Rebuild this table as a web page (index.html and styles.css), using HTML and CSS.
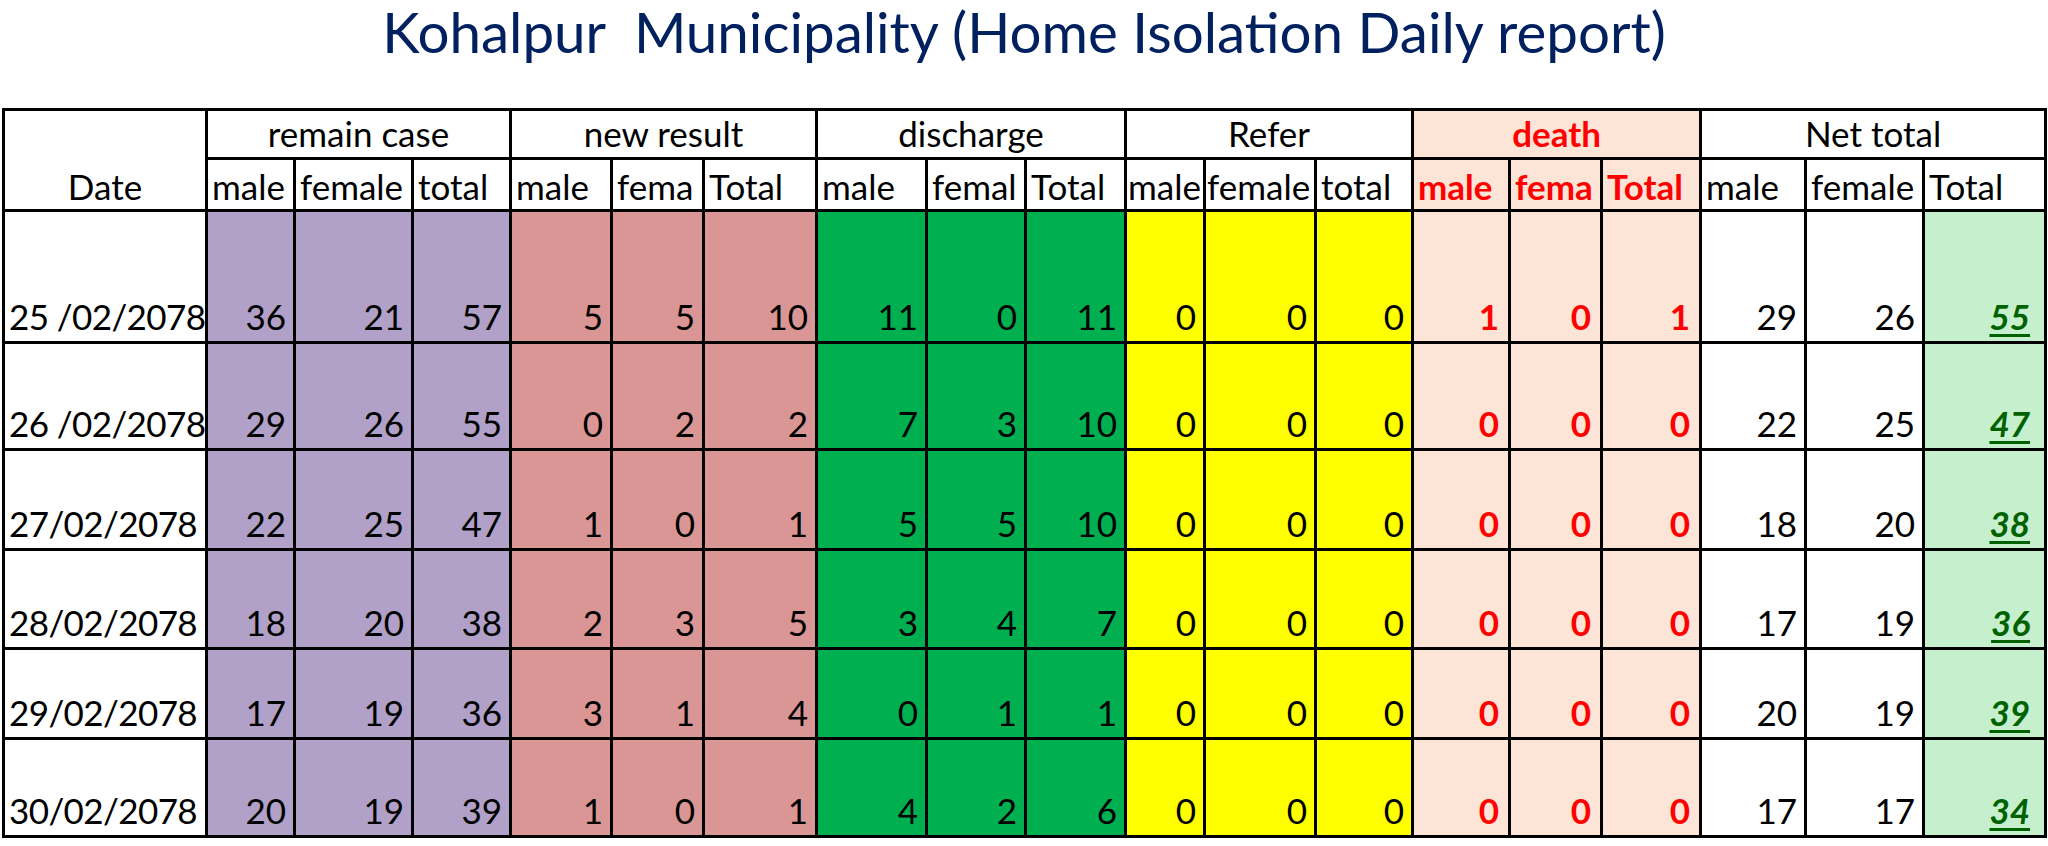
FILE: index.html
```html
<!DOCTYPE html>
<html>
<head>
<meta charset="utf-8">
<title>Kohalpur Municipality (Home Isolation Daily report)</title>
<link rel="stylesheet" href="styles.css">
</head>
<body>
<h1 class="title">Kohalpur&nbsp; Municipality (Home Isolation Daily report)</h1>
<table class="report">
  <colgroup>
    <col class="c-date">
    <col class="w88"><col class="w118"><col class="w98">
    <col class="w101"><col class="w92"><col class="w113">
    <col class="w110"><col class="w99"><col class="w100">
    <col class="w79"><col class="w111"><col class="w97">
    <col class="w97"><col class="w92"><col class="w99">
    <col class="w105"><col class="w118"><col class="w122">
  </colgroup>
  <thead>
    <tr class="h1row">
      <th class="date-head" rowspan="2">Date</th>
      <th colspan="3">remain case</th>
      <th colspan="3">new result</th>
      <th colspan="3">discharge</th>
      <th colspan="3">Refer</th>
      <th colspan="3" class="death">death</th>
      <th colspan="3">Net total</th>
    </tr>
    <tr class="h2row">
      <th>male</th><th>female</th><th>total</th>
      <th>male</th><th>fema</th><th>Total</th>
      <th>male</th><th>femal</th><th>Total</th>
      <th class="tight">male</th><th class="tight">female</th><th>total</th>
      <th class="death">male</th><th class="death">fema</th><th class="death">Total</th>
      <th>male</th><th>female</th><th>Total</th>
    </tr>
  </thead>
  <tbody>
    <tr>
      <td class="date">25 /02/2078</td>
      <td class="remain">36</td><td class="remain">21</td><td class="remain">57</td>
      <td class="new">5</td><td class="new">5</td><td class="new">10</td>
      <td class="dis">11</td><td class="dis">0</td><td class="dis">11</td>
      <td class="ref">0</td><td class="ref">0</td><td class="ref">0</td>
      <td class="death">1</td><td class="death">0</td><td class="death">1</td>
      <td>29</td><td>26</td><td class="net">55</td>
    </tr>
    <tr>
      <td class="date">26 /02/2078</td>
      <td class="remain">29</td><td class="remain">26</td><td class="remain">55</td>
      <td class="new">0</td><td class="new">2</td><td class="new">2</td>
      <td class="dis">7</td><td class="dis">3</td><td class="dis">10</td>
      <td class="ref">0</td><td class="ref">0</td><td class="ref">0</td>
      <td class="death">0</td><td class="death">0</td><td class="death">0</td>
      <td>22</td><td>25</td><td class="net">47</td>
    </tr>
    <tr>
      <td class="date">27/02/2078</td>
      <td class="remain">22</td><td class="remain">25</td><td class="remain">47</td>
      <td class="new">1</td><td class="new">0</td><td class="new">1</td>
      <td class="dis">5</td><td class="dis">5</td><td class="dis">10</td>
      <td class="ref">0</td><td class="ref">0</td><td class="ref">0</td>
      <td class="death">0</td><td class="death">0</td><td class="death">0</td>
      <td>18</td><td>20</td><td class="net">38</td>
    </tr>
    <tr>
      <td class="date">28/02/2078</td>
      <td class="remain">18</td><td class="remain">20</td><td class="remain">38</td>
      <td class="new">2</td><td class="new">3</td><td class="new">5</td>
      <td class="dis">3</td><td class="dis">4</td><td class="dis">7</td>
      <td class="ref">0</td><td class="ref">0</td><td class="ref">0</td>
      <td class="death">0</td><td class="death">0</td><td class="death">0</td>
      <td>17</td><td>19</td><td class="net">36</td>
    </tr>
    <tr>
      <td class="date">29/02/2078</td>
      <td class="remain">17</td><td class="remain">19</td><td class="remain">36</td>
      <td class="new">3</td><td class="new">1</td><td class="new">4</td>
      <td class="dis">0</td><td class="dis">1</td><td class="dis">1</td>
      <td class="ref">0</td><td class="ref">0</td><td class="ref">0</td>
      <td class="death">0</td><td class="death">0</td><td class="death">0</td>
      <td>20</td><td>19</td><td class="net">39</td>
    </tr>
    <tr>
      <td class="date">30/02/2078</td>
      <td class="remain">20</td><td class="remain">19</td><td class="remain">39</td>
      <td class="new">1</td><td class="new">0</td><td class="new">1</td>
      <td class="dis">4</td><td class="dis">2</td><td class="dis">6</td>
      <td class="ref">0</td><td class="ref">0</td><td class="ref">0</td>
      <td class="death">0</td><td class="death">0</td><td class="death">0</td>
      <td>17</td><td>17</td><td class="net">34</td>
    </tr>
  </tbody>
</table>
</body>
</html>
```

FILE: styles.css
```css
html, body {
  margin: 0;
  padding: 0;
  background: #ffffff;
}

body {
  font-family: "Lato", "Open Sans", sans-serif;
  color: #000000;
}

.title {
  margin: 0;
  padding: 0;
  font-size: 56.5px;
  line-height: 62px;
  font-weight: normal;
  text-align: center;
  color: #002060;
}

.report {
  margin: 46px 0 0 2px;
  border-collapse: collapse;
  table-layout: fixed;
  width: 2042px;
  font-size: 35px;
  line-height: 1.15;
}

.c-date { width: 203px; }
.w79 { width: 79px; }
.w88 { width: 88px; }
.w92 { width: 92px; }
.w97 { width: 97px; }
.w98 { width: 98px; }
.w99 { width: 99px; }
.w100 { width: 100px; }
.w101 { width: 101px; }
.w105 { width: 105px; }
.w110 { width: 110px; }
.w111 { width: 111px; }
.w113 { width: 113px; }
.w118 { width: 118px; }
.w122 { width: 122px; }

.report th,
.report td {
  border: 3px solid #000000;
  padding: 0 7px 5px 7px;
  vertical-align: bottom;
  white-space: nowrap;
  overflow: hidden;
  font-weight: normal;
}

.report td {
  text-align: right;
}

.h1row { height: 49px; }
.h1row th { text-align: center; padding-bottom: 4px; }

.h2row { height: 52px; }
.report .h2row th { text-align: left; padding: 0 0 3px 4px; }
.report .h2row th.tight { padding-left: 1px; }

.report th.date-head {
  text-align: center;
  padding-bottom: 3px;
}

.report tbody tr:nth-child(1) { height: 132px; }
.report tbody tr:nth-child(2) { height: 107px; }
.report tbody tr:nth-child(3) { height: 100px; }
.report tbody tr:nth-child(4) { height: 99px; }
.report tbody tr:nth-child(5) { height: 90px; }
.report tbody tr:nth-child(6) { height: 98px; }

.report td.date {
  text-align: left;
  padding-left: 4px;
  padding-right: 0;
  letter-spacing: -0.6px;
}

.remain { background: #b1a0c7; }
.new { background: #da9694; }
.dis { background: #00b050; }
.ref { background: #ffff00; }

.report .death {
  background: #fce4d6;
  color: #ff0000;
  font-weight: bold;
}

.report td.death { padding-right: 9px; }

.report td.net {
  background: #c6efce;
  color: #006100;
  font-weight: bold;
  font-style: italic;
  text-decoration: underline;
  text-decoration-thickness: 3px;
  text-underline-offset: 4px;
  padding-right: 14px;
}
```
